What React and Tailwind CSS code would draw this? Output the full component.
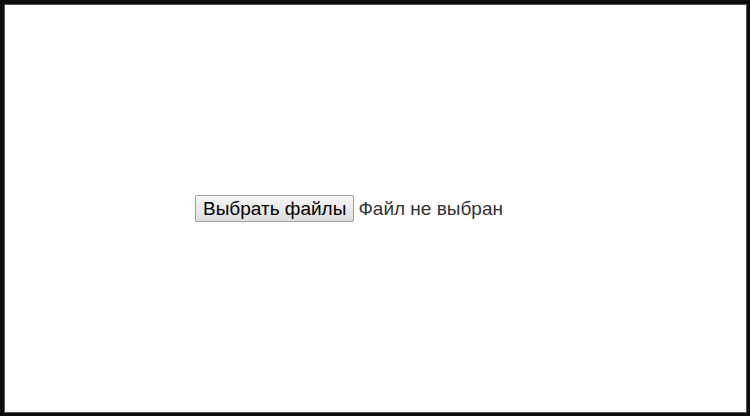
import React, { useRef, useState } from 'react'

function FileInput() {
  const inputRef = useRef(null)
  const [files, setFiles] = useState([])

  const handleChange = (e) => {
    setFiles(Array.from(e.target.files))
  }

  let status = 'Файл не выбран'
  if (files.length === 1) status = files[0].name
  if (files.length > 1) status = `Число файлов: ${files.length}`

  return (
    <div className="flex items-center gap-1 text-[19px] leading-6">
      <input ref={inputRef} type="file" multiple hidden aria-label="Выбрать файлы" onChange={handleChange} />
      <button
        type="button"
        onClick={() => inputRef.current.click()}
        className="rounded-[1px] border border-[#a2a2a2] bg-linear-to-b from-[#f6f6f6] to-[#dedede] px-[7px] pt-px text-black hover:border-[#7b7b7b]"
      >
        Выбрать файлы
      </button>
      <span className="text-[#333333]">{status}</span>
    </div>
  )
}

function App() {
  return (
    <main className="flex min-h-screen items-center border-4 border-r-3 border-b-3 border-[#0d0b0e] bg-white px-[191px] font-['Liberation_Sans',Arial,sans-serif] inset-ring inset-ring-[#57555a]">
      <FileInput />
    </main>
  )
}

export default App
